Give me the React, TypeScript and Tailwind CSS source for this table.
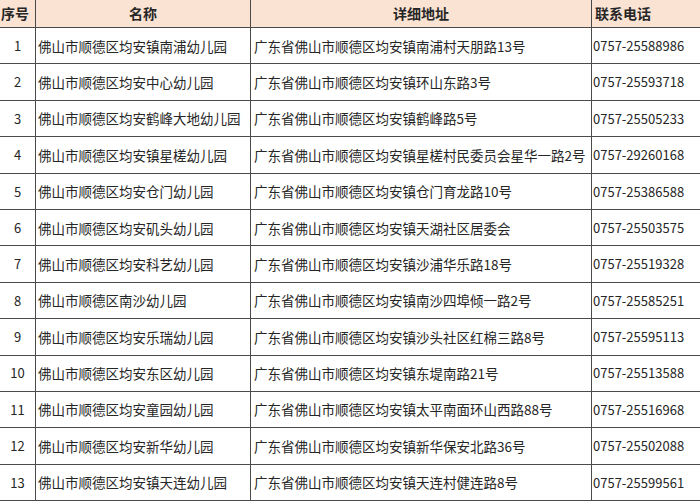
const rows = [
  ['1', '佛山市顺德区均安镇南浦幼儿园', '广东省佛山市顺德区均安镇南浦村天朋路13号', '0757-25588986'],
  ['2', '佛山市顺德区均安中心幼儿园', '广东省佛山市顺德区均安镇环山东路3号', '0757-25593718'],
  ['3', '佛山市顺德区均安鹤峰大地幼儿园', '广东省佛山市顺德区均安镇鹤峰路5号', '0757-25505233'],
  ['4', '佛山市顺德区均安镇星槎幼儿园', '广东省佛山市顺德区均安镇星槎村民委员会星华一路2号', '0757-29260168'],
  ['5', '佛山市顺德区均安仓门幼儿园', '广东省佛山市顺德区均安镇仓门育龙路10号', '0757-25386588'],
  ['6', '佛山市顺德区均安矶头幼儿园', '广东省佛山市顺德区均安镇天湖社区居委会', '0757-25503575'],
  ['7', '佛山市顺德区均安科艺幼儿园', '广东省佛山市顺德区均安镇沙浦华乐路18号', '0757-25519328'],
  ['8', '佛山市顺德区南沙幼儿园', '广东省佛山市顺德区均安镇南沙四埠倾一路2号', '0757-25585251'],
  ['9', '佛山市顺德区均安乐瑞幼儿园', '广东省佛山市顺德区均安镇沙头社区红棉三路8号', '0757-25595113'],
  ['10', '佛山市顺德区均安东区幼儿园', '广东省佛山市顺德区均安镇东堤南路21号', '0757-25513588'],
  ['11', '佛山市顺德区均安童园幼儿园', '广东省佛山市顺德区均安镇太平南面环山西路88号', '0757-25516968'],
  ['12', '佛山市顺德区均安新华幼儿园', '广东省佛山市顺德区均安镇新华保安北路36号', '0757-25502088'],
  ['13', '佛山市顺德区均安镇天连幼儿园', '广东省佛山市顺德区均安镇天连村健连路8号', '0757-25599561'],
]

const cell = 'flex items-center border-b border-r border-[#4a4a4a] whitespace-nowrap overflow-hidden'

export default function App() {
  return (
    <div className="w-[700px] h-[502px] bg-white overflow-hidden text-[#262626] font-['Noto_Sans_CJK_SC',sans-serif]">
      <div className="grid grid-cols-[36px_215px_341px_1fr]">
        <div className={`${cell} h-[28px] bg-[#fbe3d3] pl-[1px] text-[14px] font-bold`}>序号</div>
        <div className={`${cell} h-[28px] bg-[#fbe3d3] justify-center text-[14px] font-bold`}>名称</div>
        <div className={`${cell} h-[28px] bg-[#fbe3d3] justify-center text-[14px] font-bold`}>详细地址</div>
        <div className={`${cell} h-[28px] bg-[#fbe3d3] pl-[3px] text-[14px] font-bold border-r-0`}>联系电话</div>

        {rows.map((r) => (
          <div key={r[0]} className="contents">
            <div className={`${cell} h-[36.4px] justify-center text-[13px]`}>{r[0]}</div>
            <div className={`${cell} h-[36.4px] pl-[2px] text-[13.5px]`}>{r[1]}</div>
            <div className={`${cell} h-[36.4px] pl-[3px] text-[13.5px]`}>{r[2]}</div>
            <div className={`${cell} h-[36.4px] pl-[1px] text-[13px] border-r-0`}>{r[3]}</div>
          </div>
        ))}
      </div>
    </div>
  )
}
